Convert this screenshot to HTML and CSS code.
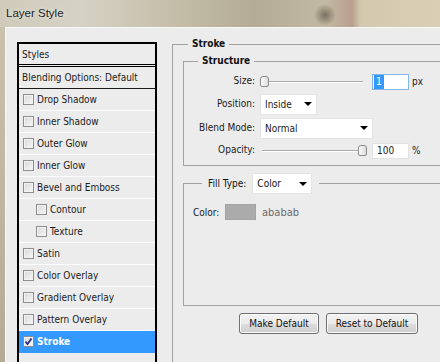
FILE: index.html
```html
<!DOCTYPE html>
<html>
  <head>
    <title>Layer Style</title>
    <meta charset="utf-8" />
    <link rel="stylesheet" href="styles.css">
  </head>
  <body>
    <div class="titlebar">Layer Style</div>
    <div class="frame">
      <div class="dialog">
        <ul class="styles-list">
          <li class="head title">Styles</li>
          <li class="head blending">Blending Options: Default</li>
          <li><span class="cb"></span>Drop Shadow</li>
          <li><span class="cb"></span>Inner Shadow</li>
          <li><span class="cb"></span>Outer Glow</li>
          <li><span class="cb"></span>Inner Glow</li>
          <li><span class="cb"></span>Bevel and Emboss</li>
          <li class="sub"><span class="cb"></span>Contour</li>
          <li class="sub"><span class="cb"></span>Texture</li>
          <li><span class="cb"></span>Satin</li>
          <li><span class="cb"></span>Color Overlay</li>
          <li><span class="cb"></span>Gradient Overlay</li>
          <li><span class="cb"></span>Pattern Overlay</li>
          <li class="active">
            <span class="cb">
              <svg width="9" height="9" viewBox="0 0 9 9"><path d="M1.5 4.5 L3.5 7 L7.5 1.5" fill="none" stroke="#2b2e86" stroke-width="1.8"/></svg>
            </span>Stroke
          </li>
          <li class="empty"></li>
        </ul>

        <div class="settings">
          <fieldset class="group outer">
            <legend>Stroke</legend>

            <fieldset class="group structure">
              <legend>Structure</legend>
              <div class="form">
                <label>Size:</label>
                <div class="control">
                  <div class="slider"><span class="thumb"></span></div>
                  <div class="field focus"><span class="selected">1</span></div>
                  <span class="unit">px</span>
                </div>

                <label>Position:</label>
                <div class="control">
                  <div class="select pos">Inside</div>
                </div>

                <label>Blend Mode:</label>
                <div class="control">
                  <div class="select blend">Normal</div>
                </div>

                <label>Opacity:</label>
                <div class="control">
                  <div class="slider full"><span class="thumb"></span></div>
                  <div class="field">100</div>
                  <span class="unit">%</span>
                </div>
              </div>
            </fieldset>

            <fieldset class="group fill">
              <legend>
                <span>Fill Type:</span>
                <span class="select filltype">Color</span>
              </legend>
              <div class="color-row">
                <span class="color-label">Color:</span>
                <span class="swatch"></span>
                <span class="hex">ababab</span>
              </div>
            </fieldset>

            <div class="buttons">
              <button class="btn make">Make Default</button>
              <button class="btn reset">Reset to Default</button>
            </div>
          </fieldset>
        </div>
      </div>
    </div>
  </body>
</html>
```

FILE: styles.css
```css
* {
  box-sizing: border-box;
}
html,
body {
  margin: 0;
  padding: 0;
}
body {
  width: 440px;
  height: 362px;
  overflow: hidden;
  font-family: "DejaVu Sans Condensed", "Liberation Sans", sans-serif;
  font-size: 10px;
  color: #1b1b1b;
  background: #c2bba5;
}

/* window chrome */
.titlebar {
  height: 27px;
  padding: 7px 0 0 6px;
  font-family: "Liberation Sans", sans-serif;
  font-size: 11.5px;
  color: #1e1e1e;
  text-shadow: 0 0 5px rgba(255, 255, 255, 0.9);
  background:
    radial-gradient(circle at 325px 15px, rgba(70, 64, 50, 0.6) 0, rgba(70, 64, 50, 0) 11px),
    linear-gradient(90deg, #cfcab9 0, #d6d2c4 18%, #c4bda8 40%, #b3ab95 58%, #c3baa2 74%, #b89f8c 80%, #d3c9ae 82%, #d9cfb4 100%);
}
.frame {
  display: flex;
  height: 335px;
  padding-left: 5px;
  background: linear-gradient(#c8c1ab, #b3ab95);
}
.dialog {
  flex: 1;
  display: flex;
  background: #ececec;
  border-top: 1px solid #f8f8f8;
  border-left: 1px solid #f8f8f8;
  padding: 14px 0 0 11px;
}

/* styles list */
.styles-list {
  list-style: none;
  margin: 0;
  padding: 0;
  width: 140px;
  flex: none;
  border: 2px solid #000;
  border-bottom: none;
  background: #ececec;
}
.styles-list li {
  height: 22px;
  display: flex;
  align-items: center;
  padding-left: 4px;
  border-bottom: 1px solid #fbfbfb;
  white-space: nowrap;
}
.styles-list .head {
  padding-left: 3px;
}
.styles-list .title {
  height: 23px;
  border-bottom: 3px double #000;
}
.styles-list .blending {
  border-bottom: 1px solid #1a1a1a;
}
.styles-list .sub {
  padding-left: 17px;
}
.styles-list .active {
  background: #3399ff;
  color: #fff;
  font-weight: bold;
  border-bottom-color: #3399ff;
}
.styles-list .empty {
  border-bottom: none;
}
.cb {
  width: 11px;
  height: 11px;
  margin-right: 3px;
  flex: none;
  display: flex;
  align-items: center;
  justify-content: center;
  border: 1px solid #8e8e8e;
  background: linear-gradient(135deg, #d8d8d8, #f7f7f7);
  box-shadow: inset 0 0 0 1px #f2f2f2;
}

/* right panel */
.settings {
  width: 290px;
  flex: none;
  margin: -5px 0 0 15px;
}
.group {
  margin: 0;
  padding: 0;
  border: 1px solid #a2a2a2;
  min-width: 0;
}
.group legend {
  padding: 0 4px;
  line-height: 14px;
  font-weight: bold;
  color: #111;
}
.outer {
  height: 340px;
  border-right: none;
  border-bottom: none;
}
.outer > legend {
  margin-left: 15px;
}
.structure {
  margin: 3px 0 0 10px;
  padding: 4px 0 5px 0;
}
.structure > legend {
  margin-left: 14px;
}
.form {
  display: grid;
  grid-template-columns: 71px auto;
  grid-template-rows: 19px 22px 22px 19px;
  column-gap: 5px;
  row-gap: 2px;
  align-items: center;
}
.form label {
  text-align: right;
  padding-bottom: 2px;
}
.control {
  display: flex;
  align-items: center;
}
.slider {
  width: 108px;
  height: 15px;
  display: flex;
  align-items: center;
  background:
    linear-gradient(#a9a9a9, #a9a9a9) 2px 7px / 101px 1px no-repeat,
    linear-gradient(#ffffff, #ffffff) 2px 8px / 101px 1px no-repeat;
}
.thumb {
  width: 9px;
  height: 11px;
  border: 1px solid #8a8a8a;
  border-radius: 3px 3px 2px 2px;
  background: linear-gradient(90deg, #fdfdfd, #dcdcdc);
}
.slider.full .thumb {
  margin-left: auto;
  margin-right: 1px;
}
.field {
  width: 37px;
  height: 16px;
  margin-left: 4px;
  padding-left: 4px;
  line-height: 14px;
  background: #fff;
  border: 1px solid #e2e2e2;
}
.field.focus {
  border-color: #86b6e6;
  padding-left: 1px;
}
.selected {
  display: inline-block;
  padding: 0 2px;
  background: #3399ff;
  color: #fff;
}
.unit {
  margin-left: 3px;
}
.select {
  display: flex;
  align-items: center;
  justify-content: space-between;
  height: 21px;
  padding: 0 4px;
  background: #fff;
  border: 1px solid #e4e4e4;
  font-weight: normal;
}
.select::after {
  content: "";
  border-left: 4px solid transparent;
  border-right: 4px solid transparent;
  border-top: 4px solid #000;
}
.pos {
  width: 57px;
}
.blend {
  width: 113px;
}

/* fill type */
.fill {
  margin: 7px 0 0 10px;
  padding: 10px 0 85px 9px;
}
.fill > legend {
  display: flex;
  align-items: center;
  margin-left: 9px;
  padding: 0 7px 0 6px;
  line-height: 20px;
  font-weight: normal;
}
.filltype {
  width: 60px;
  margin-left: 6px;
}
.color-row {
  display: flex;
  align-items: center;
  height: 16px;
}
.color-label {
  width: 32px;
}
.swatch {
  width: 31px;
  height: 16px;
  background: #ababab;
  border: 1px solid #a4a4a4;
}
.hex {
  margin-left: 6px;
  color: #6a6a6a;
  font-size: 11px;
}

/* buttons */
.buttons {
  display: flex;
  gap: 7px;
  margin-top: 7px;
  padding-left: 66px;
}
.btn {
  height: 21px;
  padding: 0;
  font-family: inherit;
  font-size: 10px;
  color: #111;
  border: 1px solid #707070;
  border-radius: 3px;
  background: linear-gradient(#f3f3f3 0%, #ebebeb 50%, #dddddd 51%, #cfcfcf 100%);
  box-shadow: inset 0 0 0 1px #fbfbfb;
}
.make {
  width: 80px;
}
.reset {
  width: 92px;
}
```
